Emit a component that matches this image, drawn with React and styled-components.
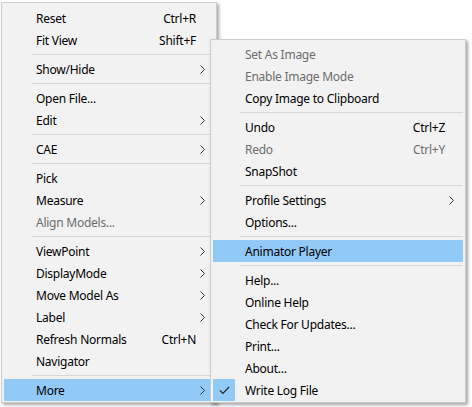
import React from 'react';
import styled, { createGlobalStyle } from 'styled-components';

const GlobalStyle = createGlobalStyle`
  html, body {
    margin: 0;
    padding: 0;
    background: #ffffff;
  }
  body {
    font-family: "Noto Sans", "Open Sans", "Liberation Sans", sans-serif;
    font-size: 12px;
    letter-spacing: -0.25px;
    color: #000;
  }
`;

const Stage = styled.div`
  position: relative;
  width: 472px;
  height: 407px;
  padding: 2px 0 0 1px;
  box-sizing: border-box;
`;

const Menu = styled.div`
  width: ${p => p.$width}px;
  box-sizing: border-box;
  background: #f2f2f2;
  border: 1px solid #cccccc;
  padding: ${p => p.$padTop}px 2px 1px 2px;
  box-shadow: 2px 2px 3px rgba(0, 0, 0, 0.35);
`;

const SubMenu = styled(Menu)`
  position: absolute;
  left: 210px;
  top: 39px;
`;

const Item = styled.div`
  position: relative;
  height: 22px;
  display: flex;
  align-items: center;
  padding: 0 18px 0 32px;
  background: ${p => (p.$hl ? '#91c9f7' : 'transparent')};
  color: ${p => (p.$disabled ? '#6d6d6d' : '#000000')};
  white-space: nowrap;
`;

const Label = styled.span`
  flex: 1;
`;

const Shortcut = styled.span`
  margin-left: 12px;
`;

const Arrow = styled.svg`
  position: absolute;
  right: 9px;
  top: 7px;
  width: 5px;
  height: 9px;
`;

const Check = styled.div`
  position: absolute;
  left: 0;
  top: 0;
  width: 22px;
  height: 22px;
  background: #91c9f7;
  display: flex;
  align-items: center;
  justify-content: center;
`;

const Separator = styled.div`
  height: 7px;
  display: flex;
  align-items: center;
  padding-left: ${p => p.$inset}px;
  &::after {
    content: '';
    flex: 1;
    height: 1px;
    background: #d7d7d7;
  }
`;

const leftItems = [
  { label: 'Reset', shortcut: 'Ctrl+R' },
  { label: 'Fit View', shortcut: 'Shift+F' },
  'sep',
  { label: 'Show/Hide', sub: true },
  'sep',
  { label: 'Open File...' },
  { label: 'Edit', sub: true },
  'sep',
  { label: 'CAE', sub: true },
  'sep',
  { label: 'Pick' },
  { label: 'Measure', sub: true },
  { label: 'Align Models...', disabled: true },
  'sep',
  { label: 'ViewPoint', sub: true },
  { label: 'DisplayMode', sub: true },
  { label: 'Move Model As', sub: true },
  { label: 'Label', sub: true },
  { label: 'Refresh Normals', shortcut: 'Ctrl+N' },
  { label: 'Navigator' },
  'sep',
  { label: 'More', sub: true, hl: true }
];

const moreItems = [
  { label: 'Set As Image', disabled: true },
  { label: 'Enable Image Mode', disabled: true },
  { label: 'Copy Image to Clipboard' },
  'sep',
  { label: 'Undo', shortcut: 'Ctrl+Z' },
  { label: 'Redo', shortcut: 'Ctrl+Y', disabled: true },
  { label: 'SnapShot' },
  'sep',
  { label: 'Profile Settings', sub: true },
  { label: 'Options...' },
  'sep',
  { label: 'Animator Player', hl: true },
  'sep',
  { label: 'Help...' },
  { label: 'Online Help' },
  { label: 'Check For Updates...' },
  { label: 'Print...' },
  { label: 'About...' },
  { label: 'Write Log File', checked: true }
];

const renderItems = (items, inset) =>
  items.map((it, i) =>
    it === 'sep' ? (
      <Separator key={i} $inset={inset} />
    ) : (
      <Item key={i} $hl={it.hl} $disabled={it.disabled}>
        {it.checked && (
          <Check>
            <svg width="11" height="9" viewBox="0 0 11 9">
              <polyline points="1,4.5 4,7.5 10,1" fill="none" stroke="#2b2b2b" strokeWidth="1.2" />
            </svg>
          </Check>
        )}
        <Label>{it.label}</Label>
        {it.shortcut && <Shortcut>{it.shortcut}</Shortcut>}
        {it.sub && (
          <Arrow viewBox="0 0 5 9">
            <polyline points="0.5,0.5 4.5,4.5 0.5,8.5" fill="none" stroke="#333" strokeWidth="1" />
          </Arrow>
        )}
      </Item>
    )
  );

export default function App() {
  return (
    <>
      <GlobalStyle />
      <Stage>
        <Menu $width={216} $padTop={4}>
          {renderItems(leftItems, 28)}
        </Menu>
        <SubMenu $width={256} $padTop={3}>
          {renderItems(moreItems, 27)}
        </SubMenu>
      </Stage>
    </>
  );
}
